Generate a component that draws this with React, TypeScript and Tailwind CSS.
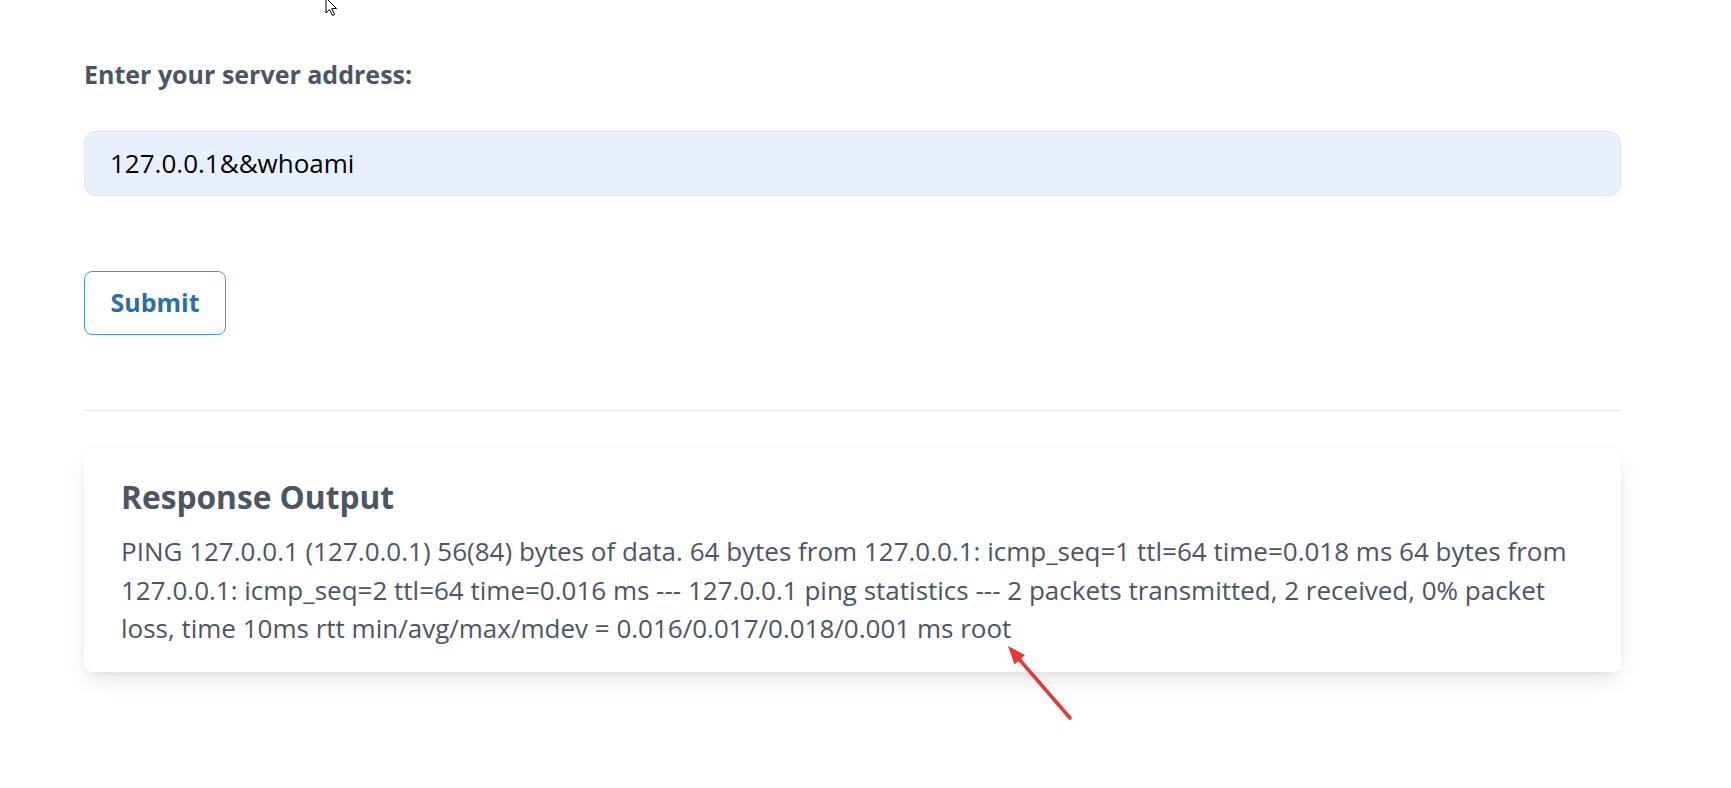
import React from 'react';

const output =
  'PING 127.0.0.1 (127.0.0.1) 56(84) bytes of data. 64 bytes from 127.0.0.1: icmp_seq=1 ttl=64 time=0.018 ms 64 bytes from 127.0.0.1: icmp_seq=2 ttl=64 time=0.016 ms --- 127.0.0.1 ping statistics --- 2 packets transmitted, 2 received, 0% packet loss, time 10ms rtt min/avg/max/mdev = 0.016/0.017/0.018/0.001 ms root';

export default function App() {
  return (
    <div className="relative min-h-screen overflow-hidden bg-white font-['Open_Sans',sans-serif]">
      <div className="pl-[84px] pt-[55.6px]">
        <div className="w-[1537px]">
          {/* form */}
          <label className="block text-[25px] leading-[37.5px] font-bold text-[#4a5568]">
            Enter your server address:
          </label>
          <input
            readOnly
            value="127.0.0.1&&whoami"
            className="mt-[37.9px] block h-[65px] w-full rounded-xl border border-[#dbe4f3] bg-[#e8f0fe] px-[25px] text-[26px] text-black outline-none"
          />
          <button className="mt-[75px] block h-[64px] w-[142px] rounded-lg border border-[#4299e1] bg-white text-[25px] font-bold text-[#2b6cb0]">
            Submit
          </button>

          <div className="mt-[75px] h-px w-full bg-[#e2e8f0]" />

          {/* response card */}
          <div className="mt-[37px] rounded-lg bg-white px-[37px] pt-[30.3px] pb-[24.7px] shadow-[0_10px_25px_-5px_rgba(0,0,0,0.12),0_4px_10px_-4px_rgba(0,0,0,0.08)]">
            <h2 className="text-[31.7px] leading-[37.5px] font-bold text-[#4a5568]">Response Output</h2>
            <p className="mt-[16.5px] text-[26px] leading-[38.5px] text-[#4a5568]">{output}</p>
          </div>
        </div>
      </div>

      {/* annotation arrow */}
      <svg className="absolute left-[990px] top-[630px]" width="100" height="100" viewBox="0 0 100 100">
        <line x1="80" y1="88" x2="29" y2="29" stroke="#e53935" strokeWidth="3.5" strokeLinecap="round" />
        <polygon points="18,16 35,25 24.5,34.5" fill="#e53935" />
      </svg>

      {/* mouse cursor */}
      <svg className="absolute left-[325px] top-[-3px]" width="14" height="20" viewBox="0 0 14 20">
        <polygon points="1,1 1,16 4.5,12.5 7.5,18.5 9.5,17.5 6.8,11.5 11.5,11.5" fill="#fff" stroke="#000" strokeWidth="1" strokeLinejoin="round" />
      </svg>
    </div>
  );
}
